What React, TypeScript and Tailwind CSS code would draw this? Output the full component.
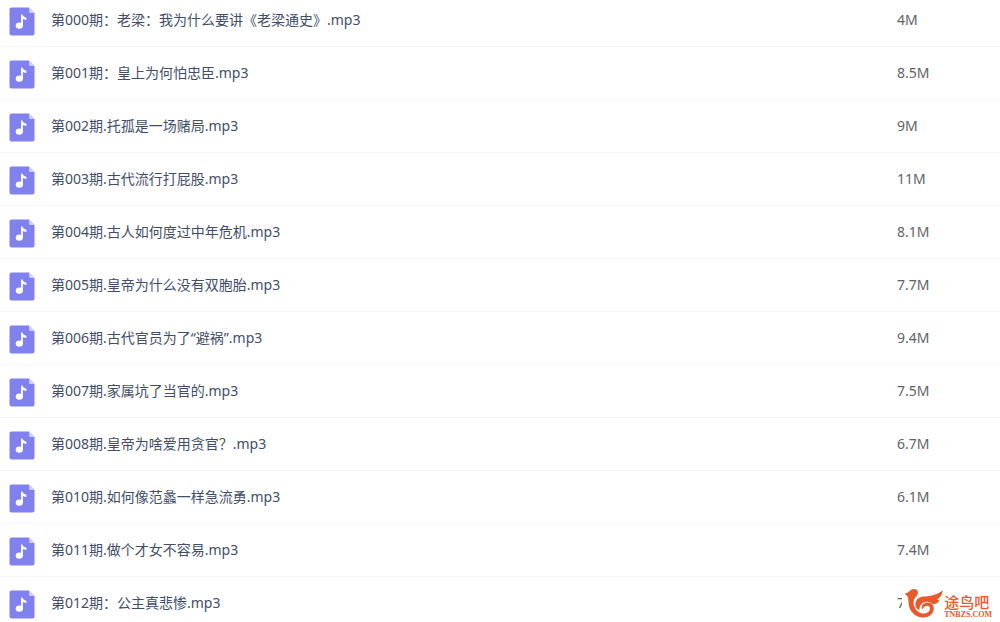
const files = [
  { name: "第000期：老梁：我为什么要讲《老梁通史》.mp3", size: "4M" },
  { name: "第001期：皇上为何怕忠臣.mp3", size: "8.5M" },
  { name: "第002期.托孤是一场赌局.mp3", size: "9M" },
  { name: "第003期.古代流行打屁股.mp3", size: "11M" },
  { name: "第004期.古人如何度过中年危机.mp3", size: "8.1M" },
  { name: "第005期.皇帝为什么没有双胞胎.mp3", size: "7.7M" },
  { name: "第006期.古代官员为了“避祸”.mp3", size: "9.4M" },
  { name: "第007期.家属坑了当官的.mp3", size: "7.5M" },
  { name: "第008期.皇帝为啥爱用贪官？.mp3", size: "6.7M" },
  { name: "第010期.如何像范蠡一样急流勇.mp3", size: "6.1M" },
  { name: "第011期.做个才女不容易.mp3", size: "7.4M" },
  { name: "第012期：公主真悲惨.mp3", size: "7" },
];

const MusicFileIcon = () => (
  <svg width="26" height="29" viewBox="0 0 26 29" className="block" aria-hidden="true">
    <path d="M2.5 0.5H20L25.5 6V26.5a2 2 0 0 1-2 2H2.5a2 2 0 0 1-2-2V2.5a2 2 0 0 1 2-2Z" fill="#8080ee" />
    <path d="M20 0.5L25.5 6H21.5a1.5 1.5 0 0 1-1.5-1.5Z" fill="#cfcffa" />
    <ellipse cx="10.3" cy="18.6" rx="3.6" ry="3.2" fill="#fff" />
    <path d="M12 7.5H13.5C13.9 9.4 15.2 10 17.4 10.7V13C15.7 12.9 14.6 12.4 13.9 11.8V18.6H12Z" fill="#fff" />
  </svg>
);

const BirdLogo = () => (
  <svg width="40" height="32" viewBox="0 0 40 32" fill="#e8592b" aria-hidden="true">
    {/* head, neck and belly */}
    <path d="M0.5 6C3 5.3 4.5 4.2 6 2.8C7.5 0.8 10.5 0.2 12.6 1.8C14.8 3.6 14.3 6.6 12.2 8.4C9.6 10.8 8.8 14.5 10.4 18.5C12 22.8 15.5 25.5 19.5 25.6C24 25.6 26.2 22.8 25.8 19.8C25.6 18.4 24.5 17.6 23 17.7C21 17.8 19.3 19.2 18.5 21.3C16.2 18.4 19.2 14.6 23.5 14.5C27.6 14.5 30.2 17.4 29.8 21C29.2 26.4 24.5 29.6 19 29.5C11 29.3 4.8 23 4.5 14.5C4.4 10.5 4.6 7.8 0.5 6Z" />
    {/* wing */}
    <path d="M11.5 18C10.8 12.5 14 9.2 19.5 8.6C26.5 8 33 7.2 38.8 2.2C38 7.2 35.8 10.2 32.6 11.7L35.6 11.9C33.8 15 31.5 16.2 28.8 16.1C26.2 13.5 22.4 12.8 19 14.8C16.4 16.4 15.2 19 15.4 22.3C13.6 21.4 12.2 20 11.5 18Z" />
  </svg>
);

const App = () => {
  return (
    <main className="relative h-screen overflow-hidden bg-white font-['Noto_Sans','Noto_Sans_CJK_SC',sans-serif] text-sm">
      <table className="-mt-[7px] w-full table-fixed border-collapse">
        <colgroup>
          <col className="w-[51px]" />
          <col />
          <col className="w-[103px]" />
        </colgroup>
        <tbody>
          {files.map((file) => (
            <tr key={file.name} className="h-[53px] border-b border-[#f5f6f9]">
              <td className="pt-1 pl-[9px]">
                <MusicFileIcon />
              </td>
              <td className="truncate pt-px text-[#424e67]">{file.name}</td>
              <td className="pt-px text-[#636366]">{file.size}</td>
            </tr>
          ))}
        </tbody>
      </table>

      <div className="absolute right-2 bottom-0.5 flex h-8 items-end bg-white pl-0.5 text-[#e8592b]">
        <BirdLogo />
        <div className="flex flex-col">
          <span className="text-[15px] leading-4 font-medium">途鸟吧</span>
          <span className="font-['Liberation_Serif',serif] text-[8px] leading-[10px] font-bold">TNBZS.COM</span>
        </div>
      </div>
    </main>
  );
};

export default App;
